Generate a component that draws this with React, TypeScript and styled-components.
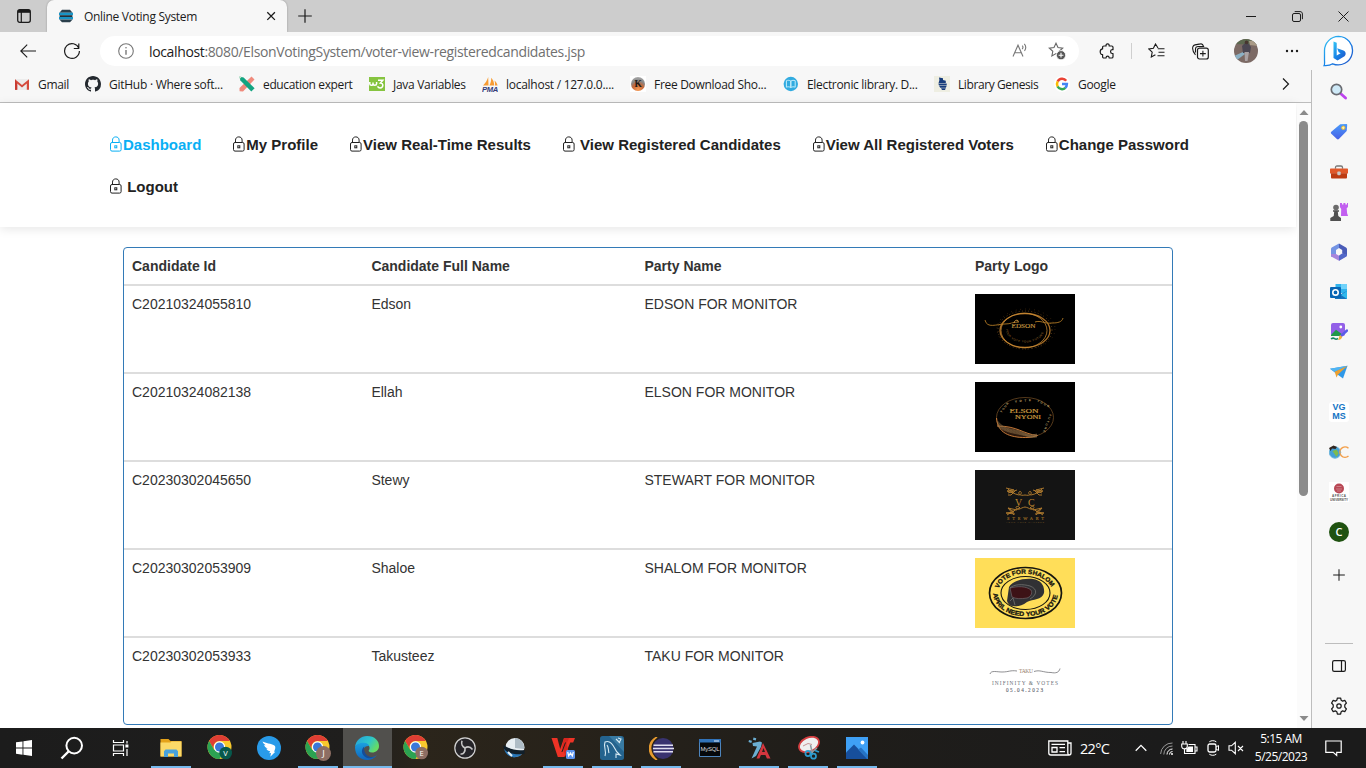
import React from 'react';
import styled, { createGlobalStyle } from 'styled-components';

const GlobalStyle = createGlobalStyle`
  *, *::before, *::after { box-sizing: border-box; }
  html, body { margin: 0; padding: 0; overflow: hidden; background: #fff; }
  svg { display: block; flex: none; }
`;

const uiFont = `"Open Sans", "Noto Sans", sans-serif`;
const pageFont = `"Liberation Sans", Arial, sans-serif`;

const Screen = styled.div`
  display: flex;
  flex-direction: column;
  width: 1366px;
  height: 768px;
  overflow: hidden;
  font-family: ${uiFont};
  color: #1b1b1b;
`;

const TabStrip = styled.div`
  display: flex;
  height: 32px;
  flex: none;
  background: #cdcdcd;
`;

const Slot = styled.div<{ $w: number }>`
  display: flex;
  flex: none;
  align-items: center;
  justify-content: center;
  width: ${(p) => p.$w}px;
`;

const Tab = styled.div`
  display: flex;
  align-items: center;
  width: 240px;
  padding: 0 8px 0 11px;
  border-radius: 7px 7px 0 0;
  background: #f7f7f7;
  box-shadow: 0 0 2px rgba(0, 0, 0, 0.3);
`;

const TabTitle = styled.span`
  flex: 1;
  margin-left: 10px;
  font-size: 12px;
  letter-spacing: -0.3px;
  white-space: nowrap;
`;

const Spacer = styled.div`
  flex: 1;
`;

const Toolbar = styled.div`
  display: flex;
  align-items: center;
  height: 38px;
  flex: none;
  padding-left: 6px;
  background: #f7f7f7;
`;

const AddressBar = styled.div`
  display: flex;
  align-items: center;
  width: 979px;
  height: 30px;
  margin: 0 4px 0 6px;
  padding: 0 3px;
  border-radius: 15px;
  background: #fff;
`;

const Url = styled.span`
  flex: 1;
  font-size: 14px;
  letter-spacing: -0.36px;
  white-space: nowrap;
  color: #707070;
  b {
    font-weight: 400;
    color: #1b1b1b;
  }
`;

const ToolDivider = styled.div`
  width: 1px;
  height: 16px;
  background: #cfcfcf;
`;

const Middle = styled.div`
  display: flex;
  height: 658px;
  flex: none;
`;

const BrowserColumn = styled.div`
  display: flex;
  flex-direction: column;
  width: 1311px;
`;

const BookmarkBar = styled.div`
  display: flex;
  align-items: center;
  height: 33px;
  flex: none;
  padding: 0 0 4px 14px;
  border-bottom: 1px solid #bdbdbd;
  background: #f7f7f7;
`;

const Bookmark = styled.div<{ $w: number; $track?: number }>`
  display: flex;
  align-items: center;
  gap: 8px;
  width: ${(p) => p.$w}px;
  flex: none;
  font-size: 12px;
  letter-spacing: ${(p) => p.$track ?? -0.3}px;
  white-space: nowrap;
`;

const Viewport = styled.div`
  display: flex;
  flex: 1;
  min-height: 0;
`;

const Page = styled.main`
  width: 1297px;
  background: #fff;
  font-family: ${pageFont};
`;

const Header = styled.header`
  width: 1296px;
  height: 124px;
  padding: 20px 90px 0 109px;
  box-shadow: 0 2px 10px rgba(0, 0, 0, 0.1);
`;

const Nav = styled.nav`
  display: flex;
  flex-wrap: wrap;
  column-gap: 31px;
`;

const NavItem = styled.a<{ $active?: boolean; $spaced?: boolean }>`
  display: flex;
  align-items: center;
  gap: ${(p) => (p.$spaced ? 4.2 : 0)}px;
  height: 42px;
  font-size: 15px;
  font-weight: 700;
  white-space: nowrap;
  color: ${(p) => (p.$active ? '#09aff4' : '#222')};
`;

const Table = styled.section`
  width: 1050px;
  margin: 20px 0 0 123px;
  border: 1px solid #337ab7;
  border-radius: 4px;
  font-size: 14px;
  line-height: 20px;
  color: #333;
`;

const Row = styled.div<{ $head?: boolean }>`
  display: grid;
  grid-template-columns: 239.4px 273.1px 330.5px 1fr;
  height: ${(p) => (p.$head ? 38 : 88)}px;
  border-bottom: 2px solid #ddd;
  font-weight: ${(p) => (p.$head ? 700 : 400)};
  &:last-child {
    height: 86px;
    border-bottom: 0;
  }
`;

const Cell = styled.div`
  padding: 8px;
`;

const ScrollTrack = styled.div`
  display: flex;
  flex-direction: column;
  align-items: center;
  width: 14px;
  padding: 6px 1px 6px 0;
  background: #fbfbfb;
`;

const ScrollThumb = styled.div`
  width: 9px;
  height: 375px;
  margin-top: 5px;
  border-radius: 5px;
  background: #8b8b8b;
`;

const Sidebar = styled.aside`
  display: flex;
  flex-direction: column;
  align-items: center;
  width: 55px;
  padding-top: 2px;
  border-left: 1px solid #bdbdbd;
  background: #f7f7f7;
`;

const SideSlot = styled.div<{ $h?: number }>`
  display: flex;
  align-items: center;
  justify-content: center;
  height: ${(p) => p.$h ?? 40}px;
  flex: none;
`;

const SideRule = styled.div`
  width: 28px;
  height: 1px;
  margin-top: 45px;
  margin-bottom: 2px;
  background: #bdbdbd;
`;

const TextTile = styled.div`
  display: flex;
  flex-direction: column;
  align-items: center;
  justify-content: center;
  width: 20px;
  height: 20px;
  border-radius: 3px;
  background: #fff;
  font: 700 9px/9px "Liberation Sans", sans-serif;
  color: #1374c4;
`;

const LetterDisc = styled.div`
  width: 20px;
  height: 20px;
  border-radius: 50%;
  background: #1f5210;
  font: 600 11px/19px "Open Sans", sans-serif;
  text-align: center;
  color: #fff;
`;

const Taskbar = styled.footer`
  display: flex;
  height: 40px;
  flex: none;
  background: linear-gradient(90deg, #1c1c1c 0%, #1f1e1d 26%, #2b251b 31%, #27221a 42%, #1f1d1a 62%, #1b1b1b 85%);
  color: #fff;
`;

const Task = styled.div<{ $w?: number; $state?: 'open' | 'active' }>`
  display: flex;
  align-items: center;
  justify-content: center;
  width: ${(p) => p.$w ?? 49}px;
  flex: none;
  background: ${(p) => (p.$state === 'active' ? '#51504d' : 'transparent')};
  background-image: ${(p) => (p.$state ? 'linear-gradient(#76b9ed, #76b9ed)' : 'none')};
  background-repeat: no-repeat;
  background-position: center bottom;
  background-size: ${(p) => (p.$state === 'active' ? '100%' : '40px')} 2px;
`;

const Weather = styled.span`
  align-self: center;
  width: 48px;
  padding-left: 4px;
  font-size: 14.5px;
  letter-spacing: -0.7px;
`;

const Clock = styled.div`
  width: 66px;
  padding-top: 2px;
  font-size: 12px;
  line-height: 18px;
  letter-spacing: -0.5px;
  text-align: center;
`;

const stroke = { fill: 'none', stroke: 'currentColor', strokeWidth: 1 } as const;

const LockIcon = () => (
  <svg width="14" height="16" viewBox="0 0 14 16" {...stroke}>
    <path d="M3.5 6.5V4.1C3.5 2.2 4.8.9 6.8.9s3.3 1.3 3.3 3.2v2.4" />
    <rect x="1.5" y="6.5" width="10.6" height="8.6" rx="1.5" />
    <rect x="5.8" y="9.8" width="2" height="2" />
  </svg>
);

const PlusIcon = ({ size = 14 }: { size?: number }) => (
  <svg width={size} height={size} viewBox="0 0 14 14" {...stroke}>
    <path d="M7 .2v13.6M.2 7h13.6" strokeWidth="1.2" />
  </svg>
);

const ServerIcon = () => (
  <svg width="16" height="16" viewBox="0 0 16 16">
    <path d="M4 1.8h8l2.6 2.9H1.4z" fill="#2a3f4c" />
    <path d="M1 4.7h14v2.5H1z" fill="#1894c6" />
    <path d="M1.6 7.2h12.8V9H1.6z" fill="#1f2f3a" />
    <path d="M1 9h14v2.4H1z" fill="#1894c6" />
    <path d="M1.4 11.4h13.2L12 14.3H4z" fill="#2a3f4c" />
  </svg>
);

const starPath = 'M8 1.2l2 4.3 4.7.6-3.5 3.2.9 4.6L8 11.6l-4.1 2.3.9-4.6L1.3 6.1 6 5.5z';

const GmailIcon = () => (
  <svg width="16" height="16" viewBox="0 0 16 16">
    <path d="M1 3h14v11H1z" fill="#ececec" />
    <path d="M1 13.8V3.3l7 5.6 7-5.6v10.5h-2.2V7.4L8 11.4 3.2 7.4v6.4z" fill="#d54b3d" />
    <path d="M3.2 7.4v6.4H1V3.3z" fill="#c83b31" />
  </svg>
);

const GithubIcon = () => (
  <svg width="16" height="16" viewBox="0 0 16 16">
    <path
      fill="#24292f"
      d="M8 0C3.58 0 0 3.58 0 8c0 3.54 2.29 6.53 5.47 7.59.4.07.55-.17.55-.38 0-.19-.01-.82-.01-1.49-2.01.37-2.53-.49-2.69-.94-.09-.23-.48-.94-.82-1.13-.28-.15-.68-.52-.01-.53.63-.01 1.08.58 1.23.82.72 1.21 1.87.87 2.33.66.07-.52.28-.87.51-1.07-1.78-.2-3.64-.89-3.64-3.95 0-.87.31-1.59.82-2.15-.08-.2-.36-1.02.08-2.12 0 0 .67-.21 2.2.82.64-.18 1.32-.27 2-.27s1.36.09 2 .27c1.53-1.04 2.2-.82 2.2-.82.44 1.1.16 1.92.08 2.12.51.56.82 1.27.82 2.15 0 3.07-1.87 3.75-3.65 3.95.29.25.54.73.54 1.48 0 1.07-.01 1.93-.01 2.2 0 .21.15.46.55.38A8 8 0 0016 8c0-4.42-3.58-8-8-8z"
    />
  </svg>
);

const PencilsIcon = () => (
  <svg width="16" height="16" viewBox="0 0 16 16">
    <path d="M12.5.5l3 3L4 15.5.6 15.3.5 12z" fill="#f08a7c" />
    <path d="M.4.4l4.2 1 11 10.8-3.3 3.3L1.4 4.6z" fill="#13a481" />
    <path d="M.4.4l2.2.5-1.7 1.9z" fill="#d9edc9" />
  </svg>
);

const W3Icon = () => (
  <svg width="16" height="14" viewBox="0 0 16 14">
    <path d="M0 0h16v14H0z" fill="#86c440" />
    <path d="M.8 5v1.7c0 2 3.2 2 3.2 0V5.4v1.3c0 2 3.6 2 3.6 0V5M9 3.2h4.8L11.4 6c3.4.2 3.1 4.900-.3 4.900-1.200 0-2-.5-2.600-1.500" fill="none" stroke="#fff" strokeWidth="1.5" />
  </svg>
);

const PmaIcon = () => (
  <svg width="16" height="16" viewBox="0 0 16 16">
    <path d="M1 9.5C3 7.5 5.5 4 6.2 1l.3 8.5zM7.4 9.5c1.4-2.8 2-5.3 1.8-7.7 2 2 3 5 3 7.7zM13 9.5c.1-2 0-3.600-.6-5 1.700 1.300 2.700 3 3.200 5z" fill="#f79b32" />
    <text x="0" y="15.600" fontFamily="Liberation Sans" fontSize="6.800" fontWeight="700" fontStyle="italic" fill="#343c78" textLength="16" lengthAdjust="spacingAndGlyphs">PMA</text>
  </svg>
);

const KIcon = () => (
  <svg width="16" height="16" viewBox="0 0 16 16">
    <defs>
      <radialGradient id="kball" cx=".5" cy=".9" r=".9">
        <stop offset="0" stopColor="#f79a52" />
        <stop offset=".45" stopColor="#c4673a" />
        <stop offset=".7" stopColor="#888" />
        <stop offset="1" stopColor="#aaa" />
      </radialGradient>
    </defs>
    <path d="M0 0h16v16H0z" fill="#fff" />
    <circle cx="8" cy="8" r="7" fill="url(#kball)" />
    <text x="4.6" y="11.2" fontFamily="Liberation Serif" fontSize="9.5" fontWeight="700" fill="#201915">K</text>
  </svg>
);

const BookIcon = () => (
  <svg width="16" height="16" viewBox="0 0 16 16">
    <circle cx="7.8" cy="8" r="7.2" fill="#31abe0" />
    <path d="M3.4 4.7c1.5-.6 3-.5 4.4.3v6.5c-1.4-.8-2.9-.9-4.4-.3zM12.2 4.7c-1.5-.6-3-.5-4.4.3v6.5c1.4-.8 2.9-.9 4.4-.3z" fill="none" stroke="#c2edfc" />
  </svg>
);

const GenesisIcon = () => (
  <svg width="16" height="16" viewBox="0 0 16 16">
    <path d="M0 0h16v16H0z" fill="#eeeee2" />
    <path d="M5 1.5l4 .8v1.6l2.8.8v2.2H4.6L5.4 4zM4.3 7.4h8.4v2H5zM5.2 10h7.4l-.8 1.7H6.2zM7 12.3h4.8L11 14H8z" fill="#173c7b" />
  </svg>
);

const GoogleIcon = () => (
  <svg width="16" height="16" viewBox="0 0 16 16">
    <circle cx="8" cy="8" r="8" fill="#fff" />
    <g fill="none" strokeWidth="2.5">
      <path d="M12.2 4.7A5 5 0 003.7 5.5" stroke="#ea4335" />
      <path d="M3.7 5.4a5.2 5.2 0 000 5.2" stroke="#fbbc05" />
      <path d="M3.6 10.5a5 5 0 007.8 1.3" stroke="#34a853" />
      <path d="M8 8.1h4.9c0 1.7-.6 2.9-1.6 3.8" stroke="#4285f4" />
    </g>
  </svg>
);

const PuzzleIcon = () => (
  <svg width="17" height="17" viewBox="0 0 17 17" {...stroke} strokeWidth="1.2" strokeLinejoin="round">
    <path d="M3.6 5.8V4.3c0-.8.5-1.3 1.3-1.3h2.2C6.8 1.6 7.5.9 8.6.9s1.8.7 1.5 2.1h2.6c.8 0 1.3.5 1.3 1.3v2.4h-.8c-2.2 0-2.2 3.8 0 3.8h.8v3.2c0 .8-.5 1.3-1.3 1.3h-2.5c-.1-1.3-.7-1.8-1.6-1.8S7.1 13.7 7 15H4.9c-.8 0-1.3-.5-1.3-1.3v-2.2C2.1 11.7 1.2 10.3 1.2 8.7s.9-2.8 2.4-2.9z" />
  </svg>
);

const Avatar = () => (
  <svg width="24" height="24" viewBox="0 0 24 24">
    <defs><clipPath id="face"><circle cx="12" cy="12" r="12" /></clipPath></defs>
    <g clipPath="url(#face)">
      <path d="M0 0h24v24H0z" fill="#7c6a65" />
      <path d="M0 0h24v6L0 5z" fill="#5c684f" />
      <path d="M15 2l9-1v6l-8-1z" fill="#a99a86" />
      <path d="M0 17l9-4 2 2-8 6z" fill="#8bb0c4" />
      <path d="M8 7l3-3h3l3 4-1 6H9z" fill="#4b4752" />
      <circle cx="12.5" cy="3.4" r="1.8" fill="#47362f" />
      <path d="M10.5 13H15l-1.500 9H11z" fill="#aaa2a4" />
    </g>
  </svg>
);

const BingIcon = () => (
  <svg width="32" height="32" viewBox="0 0 32 32">
    <defs>
      <linearGradient id="bing" x2="1" y2="1">
        <stop stopColor="#35c6f4" /><stop offset=".5" stopColor="#1784e8" /><stop offset="1" stopColor="#2453c6" />
      </linearGradient>
    </defs>
    <path d="M16.5 1.3a14.3 14.3 0 11-5.8 27.5c-2.4 1.6-5.1 2-8.6 1.8.6-1 .6-2.5.4-5.200V15.5A14.4 14.4 0 0116.5 1.3z" fill="#fff" stroke="url(#bing)" strokeWidth="1.3" />
    <path d="M11.5 6.5l3.2 1.2v12.7l3.9-2.1-1.9-1-1.6-4 6.4 2.2c2.3.9 3 4 1 5.700l-7 4.300-4-2.600z" fill="url(#bing)" />
  </svg>
);

const SearchColor = () => (
  <svg width="18" height="18" viewBox="0 0 18 18">
    <path d="M10.8 10.8l4.8 4.2" stroke="#bc43ed" strokeWidth="2.8" strokeLinecap="round" />
    <circle cx="6.5" cy="6.5" r="5.2" fill="#cfeaf8" stroke="#6a6c72" strokeWidth="1.7" />
  </svg>
);
const TagIcon = () => (
  <svg width="18" height="18" viewBox="0 0 18 18">
    <defs><linearGradient id="tag" x2="0" y2="1"><stop stopColor="#4a9bfb" /><stop offset="1" stopColor="#4860e5" /></linearGradient></defs>
    <path d="M10.2 1.3l6-.4c.6 0 1 .4 1 1l-.5 6-7.8 8.2c-.6.6-1.4.6-2 0L1.3 10.8c-.6-.6-.6-1.4 0-2z" fill="url(#tag)" />
    <circle cx="13.3" cy="4.8" r="1.7" fill="#fff2b0" stroke="#e9ba33" />
  </svg>
);
const ToolboxIcon = () => (
  <svg width="18" height="16" viewBox="0 0 18 16">
    <path d="M5.5 4.8V3.6c0-1 .6-1.6 1.5-1.6h4c.9 0 1.5.6 1.5 1.6v1.2" fill="none" stroke="#777" strokeWidth="1.3" />
    <path d="M1 4.6h16c.6 0 1 .4 1 1V9.5H0V5.6c0-.6.4-1 1-1z" fill="#e0582a" />
    <path d="M1 9.3h16v4c0 .8-.5 1.2-1.2 1.2H2.2c-.7 0-1.2-.4-1.2-1.2z" fill="#bd3c13" />
    <rect x="7.3" y="7.6" width="3.4" height="3.6" rx="1" fill="#c8c9c8" />
  </svg>
);
const ChessIcon = () => (
  <svg width="18" height="18" viewBox="0 0 18 18">
    <path d="M10 0h2v1.6h1.4V0h2v1.6H17V0h1v4l-1.3 1.3.4 5 1 2.7H11l.2-7L9.9 4z" fill="#c260f0" />
    <circle cx="6" cy="4.6" r="2.8" fill="#6b6b6b" />
    <path d="M3 7.3h6v1.5H7.8l.5 4.2 2.7 2.1V18H.3v-2.9L3.7 13l.5-4.2H3z" fill="#505050" />
  </svg>
);
const OfficeIcon = () => (
  <svg width="18" height="18" viewBox="0 0 18 18">
    <path d="M9 .4L1.700 4.600C1.200 5 1 5.400 1 6v8l5-3V7l3-2z" fill="#7494e4" />
    <path d="M9 .4l7 4c.6.400 1 .9 1 1.600v6.500l-4.800-2V7L9 5z" fill="#4a5cb8" />
    <path d="M1 11v1.500c0 .6.200 1 .7 1.300L9 17.700l7.300-4.200c.5-.3.7-.7.7-1.200l-4.800-1.800L9 12.700 6 11z" fill="#a684dc" />
    <path d="M17 11.500c0 1-.2 1.600-.7 2L9 17.700v-5l3.200-2.200z" fill="#5268c8" />
  </svg>
);
const OutlookIcon = () => (
  <svg width="18" height="18" viewBox="0 0 18 18">
    <path d="M5.5 1H17v9H5.5z" fill="#31b3ed" /><path d="M11 1h6v5h-6z" fill="#70d2fa" />
    <path d="M4 8l7 3 6-3v8H5z" fill="#1672bd" /><path d="M17 8l-6 4 6 4z" fill="#30b9ed" />
    <rect y="4" width="11" height="11" rx="1" fill="#0866b5" />
    <circle cx="5.5" cy="9.4" r="2.7" fill="none" stroke="#fff" strokeWidth="1.6" />
  </svg>
);
const DesignerIcon = () => (
  <svg width="18" height="18" viewBox="0 0 18 18">
    <rect x="1" y="0" width="14" height="13" rx="2" fill="#9360e8" />
    <circle cx="10.8" cy="4" r="1.4" fill="#fff" />
    <path d="M1 12l5-5.2 7 5.2v1H1z" fill="#219849" />
    <path d="M1 16c4-3 3 2 7-.5" fill="none" stroke="#148562" strokeWidth="1.5" />
    <path d="M17 7.5L11 13" stroke="#5a5ce8" strokeWidth="2.4" strokeLinecap="round" />
    <path d="M10 12l2.2 2.1c-.5 2-2.2 2.9-4.2 2.9 1-.9.7-3.2 2-5z" fill="#f3af37" />
  </svg>
);
const PlaneIcon = () => (
  <svg width="18" height="14" viewBox="0 0 18 14">
    <path d="M0 3.8L17.5.7 13 13.5l-5.5-4z" fill="#2f98e8" />
    <path d="M0 3.8L17.5.7l-12.8 6z" fill="#50b4f2" /><path d="M4.7 6.7L17.5.7 8 9.5l-1.5 3z" fill="#eba032" />
  </svg>
);
const GlobeIcon = () => (
  <svg width="20" height="16" viewBox="0 0 20 16">
    <circle cx="6" cy="8.5" r="5.7" fill="#45a0d6" stroke="#6fb7dc" /><path d="M3.5 7l4-1.5 2 3.5-2 4-2-3z" fill="#7fbc4c" />
    <path d="M0 4l4.5-2.5L8 3 6.5 5 3 4.5 1.500 7z" fill="#32251f" />
    <path d="M19.5 4.2a5.2 5.2 0 100 7.8" fill="none" stroke="#f3a04b" strokeWidth="1.5" />
  </svg>
);
const AfricaIcon = () => (
  <svg width="20" height="20" viewBox="0 0 20 20">
    <path d="M0 0h20v20H0z" fill="#fff" /><circle cx="10" cy="6.5" r="5" fill="#b94855" />
    <path d="M7.5 4.5h5M7 7h6M8 9h4" stroke="#cf7f88" />
    <text x="3" y="15.2" fontFamily="Liberation Sans" fontSize="3" fontWeight="700" fill="#555" textLength="14">AFRICA</text>
    <text x="1" y="18.6" fontFamily="Liberation Sans" fontSize="3" fontWeight="700" fill="#555" textLength="18">UNIVERSITY</text>
  </svg>
);
const GearIcon = () => (
  <svg width="18" height="18" viewBox="0 0 18 18" {...stroke} strokeWidth="1.25" strokeLinejoin="round">
    <path d="M7.4 1h3.2l.6 2.3 1.4.8 2.2-.7L16.4 6l-1.6 1.8v2.4l1.6 1.8-1.6 2.6-2.2-.7-1.4.8-.6 2.3H7.4l-.6-2.3-1.4-.8-2.2.7L1.6 12l1.6-1.8V7.8L1.6 6l1.6-2.6 2.2.7 1.4-.8z" />
    <circle cx="9" cy="9" r="2.2" />
  </svg>
);

const EdsonLogo = () => (
  <svg width="100" height="70" viewBox="0 0 100 70">
    <path d="M0 0h100v70H0z" />
    <ellipse cx="50" cy="36.5" rx="25" ry="17" fill="none" stroke="#a76e27" strokeWidth="1.3" />
    <ellipse cx="49" cy="36.5" rx="23" ry="17.3" fill="none" stroke="#d69438" strokeWidth=".7" />
    <ellipse cx="50" cy="36" rx="27" ry="19" fill="none" stroke="#76501f" strokeWidth="1" strokeDasharray=".7 2.5" />
    <ellipse cx="51" cy="35" rx="29" ry="20" fill="none" stroke="#694118" strokeWidth=".8" strokeDasharray=".6 4" />
    <path d="M10 26c2 9 12 4 20 4 6 0 8-2 14-2M60 28c6-2 9 2 17 1 6 0 10-1 11-5" fill="none" stroke="#b27a25" strokeWidth=".9" />
    <path d="M36 29.5h28v8H36z" />
    <text x="36.5" y="34.4" fontFamily="Liberation Serif" fontSize="6" fill="#c09440" stroke="#c09440" strokeWidth=".15" textLength="24" lengthAdjust="spacingAndGlyphs">EDSON</text>
    <path id="edarc" d="M31 35c0 18 38 18 38 0" fill="none" />
    <text fontFamily="Liberation Sans" fontSize="2.8" fill="#a7752f"><textPath href="#edarc" textLength="48">YOUR VOTE YOUR FUTURE</textPath></text>
    <path d="M39 29c0-3 5-4 4-1" fill="none" stroke="#ca9540" />
  </svg>
);

const arcWords = [
  { word: 'YOUR', x: 26.5, y: 31, turn: -52, length: 12 },
  { word: 'VOTE', x: 40, y: 20.5, turn: -5, length: 16 },
  { word: 'YOUR', x: 62, y: 19.5, turn: 27, length: 13 },
  { word: 'FUTURE', x: 74.5, y: 32, turn: 110, length: 19 },
];

const ElsonLogo = () => (
  <svg width="100" height="70" viewBox="0 0 100 70">
    <path d="M0 0h100v70H0z" />
    <ellipse cx="50" cy="35.5" rx="28.5" ry="20" fill="none" stroke="#795127" strokeWidth=".7" />
    <path d="M21.5 36c1 15 13 19.5 29 19.5 5 0 9-1 12-2C48 52 43 44 22 44" fill="#2b180d" stroke="#d5823c" strokeWidth=".9" />
    {[0, 1, 2, 3, 4, 5].map((n) => (
      <path key={n} d={`M22.5 ${39 + n}C30 ${49 + n * 0.3} 39 ${46 + n} 47 ${50 + n * 0.6}s10 3 15 2`} fill="none" stroke="#8f7048" strokeWidth=".5" />
    ))}
    {arcWords.map((w) => (
      <text
        key={w.turn}
        transform={`translate(${w.x} ${w.y}) rotate(${w.turn})`}
        fontFamily="Liberation Sans"
        fontSize="3"
        fontWeight="700"
        fill="#c4ac72"
        textLength={w.length}
      >
        {w.word}
      </text>
    ))}
    <text x="34.5" y="30.900" fontFamily="Liberation Serif" fontSize="5.1" fill="#c8983f" stroke="#c8983f" strokeWidth=".15" textLength="29" lengthAdjust="spacingAndGlyphs">ELSON</text>
    <text x="40" y="37.2" fontFamily="Liberation Serif" fontSize="5.1" fill="#c8983f" stroke="#c8983f" strokeWidth=".15" textLength="26" lengthAdjust="spacingAndGlyphs">NYONI</text>
  </svg>
);
const StewartLogo = () => (
  <svg width="100" height="70" viewBox="0 0 100 70">
    <path d="M0 0h100v70H0z" fill="#141414" />
    {[1, -1].map((side) => (
      <g key={side} transform={`translate(50 0) scale(${side} 1)`} fill="none" stroke="#aa772d" strokeWidth="1">
        <path d="M0 25c5 1 7-1 6-3-2-2-4 2 0 3 5-1 8-3 11-6M19 18l-8 2 7 1-6 2M9 20l5 5h3M8 20l9 3M0 37c5 1 5 3 8 2 3-2-1-4-3-1 3 1 5 2 13 7M8 40l9-2-6 4 8 1-9 1M11 45l6-7" />
      </g>
    ))}
    <text x="40" y="35.5" fontFamily="Liberation Serif" fontSize="10" fill="#c0872f">V</text>
    <text x="53" y="35.5" fontFamily="Liberation Serif" fontSize="10" fill="#c0872f">C</text>
    <text x="32" y="49.5" fontFamily="Liberation Serif" fontSize="4.4" fill="#9c6c24" stroke="#9c6c24" strokeWidth=".15" textLength="37">STEWART</text>
    <text x="31" y="52.8" fontFamily="Liberation Sans" fontSize="2.3" fill="#6e5325" textLength="38">YOUR VOTE MATTERS</text>
  </svg>
);
const ShalomLogo = () => (
  <svg width="100" height="70" viewBox="0 0 100 70">
    <path d="M0 0h100v70H0z" fill="#ffde59" />
    <ellipse cx="50.5" cy="35" rx="36" ry="25.5" fill="none" stroke="#15150f" strokeWidth="1.7" />
    <ellipse cx="50.5" cy="35" rx="24.5" ry="16.5" fill="none" stroke="#15150f" strokeWidth="1.1" />
    <path id="shtop" d="M23.5 30.5C31 10.500 70 10.500 78.500 33" fill="none" />
    <path id="shbot" d="M18 33.5C18 66.500 83 66.500 83 33.500" fill="none" />
    <g fontFamily="Liberation Sans" fontWeight="700" fill="#15150f" stroke="#15150f" strokeWidth=".3">
      <text fontSize="6.2"><textPath href="#shtop" textLength="63" lengthAdjust="spacingAndGlyphs">VOTE FOR SHALOM</textPath></text>
      <text fontSize="6.4"><textPath href="#shbot" startOffset="2" textLength="85" lengthAdjust="spacingAndGlyphs">APRIL NEED YOUR VOTE</textPath></text>
    </g>
    <path d="M34 29c3-6 14-9 24-8 8 1 12 7 11 14-2 7-11 6-17 9-5 4-10 5-14 4-3 0-5-2-6-5z" fill="#313134" />
    <path d="M35 30c8-2 16-2 21 2 2 4-1 7-4 8-6 1-11 1-15-1z" fill="#3d1216" stroke="#71666a" strokeWidth=".7" />
    <path d="M35 30c4-4 13-4 20-2 8 3 7 9 0 13M35 43l3-3 2 7" fill="none" stroke="#898987" strokeWidth=".6" />
  </svg>
);
const TakuLogo = () => (
  <svg width="100" height="70" viewBox="0 0 100 70">
    <path d="M15 28c1-4 7-2 12-2 7 0 8-2 15-1M59 25.5c6-2 9 1 17 1 5 1 8 0 9-4" fill="none" stroke="#606064" strokeWidth=".7" />
    <text x="44" y="27.3" fontFamily="Liberation Serif" fontSize="5.5" fill="#947a69" textLength="14">TAKU</text>
    <text x="17" y="38.7" fontFamily="Liberation Serif" fontSize="5.4" fill="#6a7079" textLength="66">INIFINITY &amp; VOTES</text>
    <text x="31" y="46" fontFamily="Liberation Serif" fontSize="5.2" fill="#59616d" stroke="#59616d" strokeWidth=".1" textLength="37">05.04.2023</text>
  </svg>
);

const ChromeIcon = ({ letter, color, large }: { letter: string; color: string; large?: boolean }) => (
  <svg width="26" height="26" viewBox="0 0 26 26">
    <circle cx="12.5" cy="12" r="12" fill="#f9c82d" />
    <path d="M2.1 6A12 12 0 0122.9 6H12.5a6 6 0 00-5.2 9z" fill="#df3e34" />
    <path d="M2.1 6A12 12 0 0012.5 24l5.2-9H7.3z" fill="#2ba252" />
    <circle cx="12.5" cy="12" r="5.7" fill="#fff" /><circle cx="12.5" cy="12" r="4.5" fill="#3b78d8" />
    <circle cx={large ? 18.5 : 18.7} cy={large ? 18.5 : 18} r={large ? 7.5 : 6.3} fill={color} />
    <text x="18.6" y={large ? 21.9 : 20.8} textAnchor="middle" fontFamily="Open Sans" fontSize={large ? 9.5 : 7.5} fill="#fff">{letter}</text>
  </svg>
);

const StartIcon = () => <svg width="16" height="16" viewBox="0 0 16 16" fill="#fff"><path d="M0 2.3l6.5-.9v6.2H0zM7.4 1.2L16 0v7.6H7.4zM0 8.5h6.5v6.2L0 13.8zM7.4 8.5H16V16l-8.600-1.200z" /></svg>;
const TaskSearch = () => <svg width="24" height="24" viewBox="0 0 24 24" fill="none" stroke="#fff" strokeWidth="2"><circle cx="14.2" cy="9.6" r="7.8" /><path d="M8.5 15.5l-7 7" strokeWidth="2.4" /></svg>;
const TaskView = () => <svg width="18" height="18" viewBox="0 0 18 18" fill="none" stroke="#fff" strokeWidth="1.2"><path d="M1.5 1v2.5h10V1M1.5 17v-2.5h10V17M1.5 6h10v6h-10zM15 2v2.5M15 10v7" /><path d="M13.4 5.5h3v3h-3z" fill="#fff" stroke="none" /></svg>;
const FolderIcon = () => (
  <svg width="22" height="20" viewBox="0 0 22 20">
    <path d="M.5 1h8l2 2h11v15.5H.5z" fill="#e4a21a" /><path d="M.5 4.5h10l1-1h10v15H.5z" fill="#fbd968" />
    <path d="M4 19v-5.7l1.5-1.8h11l1.500 1.800V19h-4v-3.5H8V19z" fill="#48a2dc" />
  </svg>
);
const BirdIcon = () => (
  <svg width="24" height="24" viewBox="0 0 24 24"><circle cx="12" cy="12" r="12" fill="#299be9" /><path d="M5.5 5.5c3 1.8 9 2 11.5 3.7 2 1 1.500 4 0 6.500h1.300l-5 5 .7-3.700-1.800.2 1-2c-2.900-.6-3.700-2-3.800-2.800l1.600.2C8 11.300 7.300 10 7.200 9l1.500.3C6.900 8 6.100 7 5.500 5.500z" fill="#fff" /></svg>
);
const EdgeIcon = () => (
  <svg width="24" height="24" viewBox="0 0 24 24">
    <defs>
      <linearGradient id="edgeA" x2="1" y2=".5"><stop stopColor="#269fd9" /><stop offset=".6" stopColor="#2cc5cc" /><stop offset="1" stopColor="#66dc64" /></linearGradient>
      <linearGradient id="edgeB" x2="0" y2="1"><stop stopColor="#1ba0df" /><stop offset="1" stopColor="#1064bd" /></linearGradient>
    </defs>
    <path d="M0 11C1 4 6 0 12 0c8 0 12 5 12 10 0 4-3 6.5-7 6.5-3 0-4-1.3-3-2.4 1.5-2.4 0-6.6-4.5-6.6C5 7.5 1 9 0 11z" fill="url(#edgeA)" />
    <path d="M0 11C2 6 13 5 14.3 10.2 10 9.4 7.5 13 9 17c2 5 9 5.4 13 2-3 4-7 5-10 5C5 24 0 19 0 11z" fill="url(#edgeB)" />
    <path d="M9.2 10.5C6.5 12.6 6 17 9 20c3 3 8 3 11.8.5C14 23 8 18 9.2 10.5z" fill="#164d98" />
  </svg>
);
const ObsIcon = () => (
  <svg width="22" height="22" viewBox="0 0 22 22"><circle cx="11" cy="11" r="10.2" fill="#252428" stroke="#d2d2d2" strokeWidth="1.2" />
    <g fill="none" stroke="#c7c7c7" strokeWidth="1.6"><path d="M8 3.8c-1 3 .5 6 3 7.2M18.5 12.5c-2-2.5-5-3.2-7.5-1.5M6.5 17c3 .5 5-2.5 4.5-6" /></g></svg>
);
const BallIcon = () => (
  <svg width="22" height="22" viewBox="0 0 22 22"><circle cx="12" cy="10.5" r="9.5" fill="#e7eef3" /><path d="M12 1v10l9 1a9.5 9.5 0 00-9-11z" fill="#aebcc6" /><path d="M1 10c5 1 12 5 19 5l-3 4-6 1.5C5 20 1 15 1 10z" fill="#2877b9" /><path d="M.5 8c6 4 12 6 21 5v4C11 18 3 16 .5 11z" fill="#111f2a" /><path d="M5 15l4 4" stroke="#e8f2f8" strokeWidth="2" /></svg>
);
const WpsIcon = () => (
  <svg width="25" height="24" viewBox="0 0 25 24"><path d="M.5 2h5.8l2.900 11L13 2h11l-1.8 4.5h-3L13.500 21H6.8z" fill="#ee3326" /><path d="M13 2h5l-2.5 6 2.5 9-3 4-4-10z" fill="#d8261e" /><path d="M14.500 6.500l-3.600 9.500" stroke="#231f1a" strokeWidth="1" /><rect x="15" y="14" width="9" height="9" rx="1.5" fill="#5c93ed" /><path d="M16.7 16l1 4 1.8-3 1.8 3 1-4" fill="none" stroke="#fff" strokeWidth="1.2" /></svg>
);
const WorkbenchIcon = () => (
  <svg width="24" height="24" viewBox="0 0 24 24"><rect width="24" height="24" rx="2.5" fill="#24638e" /><path d="M3 0h18l3 4v12L9 0z" fill="#387aa2" /><path d="M5 20C7 15 3 11 5 6c7-3 10 8 12 10l3 3-4-1v4M9 17c-1-3 0-5-2-8M16 3l4 4M18 2l3 1-2 4" fill="none" stroke="#d7eaf3" strokeWidth="1.1" /></svg>
);
const EclipseIcon = () => (
  <svg width="25" height="23" viewBox="0 0 25 23"><path d="M8 0C-2 5-2 18 8 23-1 15 0 6 8 0z" fill="#e79b2f" stroke="#e79b2f" strokeWidth="1.5" /><circle cx="14" cy="11.5" r="10.5" fill="#39336f" /><path d="M4.5 8.2H24M4 11.5h21M4.5 14.8H24" stroke="#e1dff0" strokeWidth="1.5" /></svg>
);
const MysqlIcon = () => (
  <svg width="22" height="18" viewBox="0 0 22 18"><path d="M.5.5h21v17H.5z" fill="#05080b" stroke="#4e85bd" /><path d="M0 0h22v3.5H0z" fill="#3173b9" /><path d="M15 2h5" stroke="#dbe7f2" /><text x="1.5" y="11.5" fontFamily="Liberation Sans" fontSize="6" fill="#ddd" textLength="19">MySQL</text></svg>
);
const AnalysisIcon = () => (
  <svg width="23" height="22" viewBox="0 0 23 22"><path d="M1 3l3 .7-.7 2.300L.5 5zM5.500.5l2.800.8-.6 2.200-2.700-.8zM4.500 6L12 4.500l2 1-1 4.500-5 9-4.500 2.500L9 9.500 5 9z" fill="#6baed2" /><path d="M15 6l7.500 15.500h-3.600l-1.500-3.500h-4.500l-1.500 3.500H8.500z" fill="#d4363e" /><path d="M14 15h3l-1.500-4z" fill="#25221d" /></svg>
);
const SnipIcon = () => (
  <svg width="25" height="24" viewBox="0 0 25 24"><ellipse cx="13" cy="8.5" rx="10.5" ry="7" transform="rotate(-25 13 8.5)" fill="#efefef" stroke="#d43e40" strokeWidth="1.8" /><path d="M7 10l5-2.5 4 1" fill="none" stroke="#c69294" /><path d="M14.5 9l2 9M21 12l-7 6" stroke="#8f9ba1" strokeWidth="1.5" /><circle cx="12" cy="17.5" r="2.6" fill="none" stroke="#2d9ccf" strokeWidth="1.7" /><circle cx="17.5" cy="20.2" r="2.5" fill="none" stroke="#2d9ccf" strokeWidth="1.7" /><path d="M19 14.5l4 1.5" stroke="#2d9ccf" strokeWidth="1.8" /></svg>
);
const PhotosIcon = () => (
  <svg width="22" height="22" viewBox="0 0 22 22"><path d="M0 0h22v22H0z" fill="#3fa0f5" /><path d="M0 15.5l8-8L22 22H0z" fill="#174f9c" /><path d="M12 12.5l3-2 7 7.5v4h-1z" fill="#2673c4" /><circle cx="16.5" cy="5.5" r="1.9" fill="#fff" /></svg>
);

const bookmarks: Array<{ name: string; w: number; icon: React.ReactNode; track?: number }> = [
  { name: 'Gmail', w: 71, icon: <GmailIcon /> },
  { name: 'GitHub · Where soft...', w: 154, icon: <GithubIcon />, track: -0.26 },
  { name: 'education expert', w: 130, icon: <PencilsIcon />, track: -0.36 },
  { name: 'Java Variables', w: 113, icon: <W3Icon /> },
  { name: 'localhost / 127.0.0....', w: 148, icon: <PmaIcon />, track: -0.27 },
  { name: 'Free Download Sho...', w: 153, icon: <KIcon /> },
  { name: 'Electronic library. D...', w: 151, icon: <BookIcon />, track: -0.32 },
  { name: 'Library Genesis', w: 120, icon: <GenesisIcon />, track: -0.4 },
  { name: 'Google', w: 80, icon: <GoogleIcon /> },
];

const navItems = [
  { label: 'Dashboard', active: true },
  { label: 'My Profile' },
  { label: 'View Real-Time Results' },
  { label: 'View Registered Candidates', spaced: true },
  { label: 'View All Registered Voters' },
  { label: 'Change Password' },
  { label: 'Logout', spaced: true },
];

const candidates = [
  { id: 'C20210324055810', name: 'Edson', party: 'EDSON FOR MONITOR', logo: <EdsonLogo /> },
  { id: 'C20210324082138', name: 'Ellah', party: 'ELSON FOR MONITOR', logo: <ElsonLogo /> },
  { id: 'C20230302045650', name: 'Stewy', party: 'STEWART FOR MONITOR', logo: <StewartLogo /> },
  { id: 'C20230302053909', name: 'Shaloe', party: 'SHALOM FOR MONITOR', logo: <ShalomLogo /> },
  { id: 'C20230302053933', name: 'Takusteez', party: 'TAKU FOR MONITOR', logo: <TakuLogo /> },
];

const sideApps = [
  <SearchColor />, <TagIcon />, <ToolboxIcon />, <ChessIcon />, <OfficeIcon />, <OutlookIcon />, <DesignerIcon />, <PlaneIcon />,
  <TextTile><span>VG</span><span>MS</span></TextTile>,
  <GlobeIcon />, <AfricaIcon />, <LetterDisc>C</LetterDisc>,
];

const tasks: Array<{ icon: React.ReactNode; state?: 'open' | 'active' }> = [
  { icon: <FolderIcon />, state: 'open' },
  { icon: <ChromeIcon letter="V" color="#07584c" /> },
  { icon: <BirdIcon /> },
  { icon: <ChromeIcon letter="J" color="#8d6e63" large />, state: 'open' },
  { icon: <EdgeIcon />, state: 'active' },
  { icon: <ChromeIcon letter="E" color="#8d6e63" /> },
  { icon: <ObsIcon /> },
  { icon: <BallIcon /> },
  { icon: <WpsIcon />, state: 'open' },
  { icon: <WorkbenchIcon />, state: 'open' },
  { icon: <EclipseIcon />, state: 'open' },
  { icon: <MysqlIcon /> },
  { icon: <AnalysisIcon />, state: 'open' },
  { icon: <SnipIcon />, state: 'open' },
  { icon: <PhotosIcon />, state: 'open' },
];

const BrowserTabs = () => (
  <TabStrip>
    <Slot $w={47}>
      <svg width="14" height="14" viewBox="0 0 14 14" {...stroke}>
        <rect x=".7" y=".7" width="12.6" height="12.6" rx="2" strokeWidth="1.3" />
        <path d="M4.3 3v10" strokeWidth="1.2" /><path d="M1 1h12v2.8H1z" fill="currentColor" stroke="none" />
      </svg>
    </Slot>
    <Tab>
      <ServerIcon />
      <TabTitle>Online Voting System</TabTitle>
      <svg width="16" height="16" viewBox="0 0 16 16" {...stroke}><path d="M4.3 4.3l7.6 7.6M11.9 4.3l-7.6 7.6" strokeWidth="1.3" /></svg>
    </Tab>
    <Slot $w={35}><PlusIcon /></Slot>
    <Spacer />
    <Slot $w={46}><svg width="10" height="10" viewBox="0 0 10 10" {...stroke}><path d="M0 5.5h10" /></svg></Slot>
    <Slot $w={46}><svg width="11" height="11" viewBox="0 0 11 11" {...stroke}><rect x=".5" y="2.5" width="8" height="8" rx="1.5" /><path d="M2.7.6h5.4c1.400 0 2.300.9 2.300 2.300v5.300" /></svg></Slot>
    <Slot $w={46}><svg width="11" height="11" viewBox="0 0 11 11" {...stroke}><path d="M.5.5l10 10M10.5.5l-10 10" /></svg></Slot>
  </TabStrip>
);

const BrowserToolbar = () => (
  <Toolbar>
    <Slot $w={44}><svg width="16" height="14" viewBox="0 0 16 14" {...stroke}><path d="M7.2.6L.8 7l6.4 6.4M1 7h15" strokeWidth="1.1" /></svg></Slot>
    <Slot $w={44}><svg width="18" height="18" viewBox="0 0 18 18" {...stroke}><path d="M15.9 6.3A7.4 7.4 0 1016.4 9M15.8 1.5v5h-5" strokeWidth="1.2" /></svg></Slot>
    <AddressBar>
      <Slot $w={46}><svg width="16" height="16" viewBox="0 0 16 16" fill="none" stroke="#777"><circle cx="8" cy="8" r="7.3" strokeWidth="1.1" /><path d="M8 7v4.8" strokeWidth="1.4" /><circle cx="8" cy="4.7" r=".8" fill="#777" stroke="none" /></svg></Slot>
      <Url><b>localhost</b>:8080/ElsonVotingSystem/voter-view-registeredcandidates.jsp</Url>
      <Slot $w={38}><svg width="17" height="16" viewBox="0 0 17 16" fill="none" stroke="#777"><path d="M1 13.5L6 2.2l5 11.3M2.7 9.7h6.600M10.2 2.7c.9.9.9 2.3 0 3.4M12.3.9c1.700 2 1.700 4.900.2 7" strokeWidth="1.1" /></svg></Slot>
      <Slot $w={35}><svg width="18" height="18" viewBox="0 0 18 18" fill="none" stroke="#666"><path d={starPath} strokeWidth="1.1" /><circle cx="13" cy="13.2" r="4.6" fill="#555" stroke="#fff" strokeWidth=".8" /><path d="M13 10.8v4.8M10.6 13.2h4.8" stroke="#fff" strokeWidth="1.1" /></svg></Slot>
      <Slot $w={2} />
    </AddressBar>
    <Slot $w={48}><PuzzleIcon /></Slot>
    <ToolDivider />
    <Slot $w={48}><svg width="17" height="16" viewBox="0 0 17 16" {...stroke}><path d="M10 5L7.5 1 5.4 5.3.8 6l3.4 3.2-.9 4.8 4.1-2.3M9.8 5.8h6.700M10.5 9.3h6M9.5 12.8h7" strokeWidth="1.1" /></svg></Slot>
    <Slot $w={41}><svg width="17" height="17" viewBox="0 0 17 17" {...stroke}><rect x="5.5" y="5.2" width="10.8" height="10.8" rx="2" strokeWidth="1.2" /><path d="M10.9 7.7v5.8M8 10.6h5.8M3.5 11.8C1.4 9.5.2 6 .9 3.7 1.3 2.6 2 2.2 3 1.9L8.5.9c1.400-.3 2.500.6 2.900 2.300M3.5 9.5V6.2c0-1.700 1-2.700 2.700-2.700h6" strokeWidth="1.1" /></svg></Slot>
    <Slot $w={49}><Avatar /></Slot>
    <Slot $w={43}><svg width="14" height="4" viewBox="0 0 14 4" fill="#1b1b1b"><circle cx="2" cy="2" r="1.2" /><circle cx="7" cy="2" r="1.2" /><circle cx="12" cy="2" r="1.2" /></svg></Slot>
    <Slot $w={50}><BingIcon /></Slot>
  </Toolbar>
);

const CandidateTable = () => (
  <Table>
    <Row $head>
      <Cell>Candidate Id</Cell>
      <Cell>Candidate Full Name</Cell>
      <Cell>Party Name</Cell>
      <Cell>Party Logo</Cell>
    </Row>
    {candidates.map((c) => (
      <Row key={c.id}>
        <Cell>{c.id}</Cell>
        <Cell>{c.name}</Cell>
        <Cell>{c.party}</Cell>
        <Cell>{c.logo}</Cell>
      </Row>
    ))}
  </Table>
);

const SystemTray = () => (
  <>
    <Slot $w={32}><svg width="24" height="16" viewBox="0 0 24 16" fill="none" stroke="#fff" strokeWidth="1.3"><path d="M20 3h3v10c0 1.200-.7 2-2 2M.8 1h19v12c0 1.200.6 2 1.500 2H3c-1.300 0-2.200-.8-2.200-2zM3.500 4.300h13.500M4 7.500h5v4.500H4zM11.500 7.700H17M11.500 11.700H17" /></svg></Slot>
    <Weather>22°C</Weather>
    <Slot $w={34}><svg width="12" height="8" viewBox="0 0 12 8" fill="none" stroke="#fff" strokeWidth="1.3"><path d="M.7 6.8L6 1.4l5.3 5.4" /></svg></Slot>
    <Slot $w={17}><svg width="13" height="13" viewBox="0 0 13 13" fill="none" stroke="#999"><path d="M.6 12A11.5 11.5 0 0112.5 1M3.8 12.5A8.5 8.5 0 0112.5 4" /><path d="M7 12.5A5.5 5.5 0 0112.5 7M9.5 12.5a3 3 0 013-3" stroke="#fff" /><circle cx="12" cy="12" r="1" fill="#fff" stroke="none" /></svg></Slot>
    <Slot $w={28}><svg width="17" height="14" viewBox="0 0 17 14" fill="none" stroke="#fff"><path d="M2 0v3M5 0v3M.7 3h5.6v2.2c0 3.600-5.600 3.600-5.600 0zM3.500 8v4.500H14v-9H7.500M14 6h2v4h-2" strokeWidth="1.1" /><path d="M7.5 5.5H12V11H5.3V8.5z" fill="#fff" stroke="none" /></svg></Slot>
    <Slot $w={20}><svg width="13" height="16" viewBox="0 0 13 16" fill="none" stroke="#fff"><path d="M2.3 1.8c2-1.5 5-1.5 7 0M2.3 14.2c2 1.5 5 1.5 7 0" /><rect x="1" y="4" width="8" height="8" rx="1.7" strokeWidth="1.3" /><path d="M9 7l2.5-1.5v5L9 9" /></svg></Slot>
    <Slot $w={25}><svg width="16" height="14" viewBox="0 0 16 14" fill="none" stroke="#fff"><path d="M1 4.8h2.5l3.800-3.500v11.400L3.500 9.200H1zM10 5l5 5M15 5l-5 5" strokeWidth="1.1" /></svg></Slot>
    <Clock>5:15 AM<br />5/25/2023</Clock>
    <Slot $w={38}><svg width="17" height="17" viewBox="0 0 17 17" fill="none" stroke="#fff" strokeWidth="1.2"><path d="M.8 1h15.4v11.3h-4.5v3.2l-3.500-3.200H.8z" /></svg></Slot>
    <Slot $w={14} />
  </>
);

export default function App() {
  return (
    <Screen>
      <GlobalStyle />
      <BrowserTabs />
      <BrowserToolbar />
      <Middle>
        <BrowserColumn>
          <BookmarkBar>
            {bookmarks.map((b) => (
              <Bookmark key={b.name} $w={b.w} $track={b.track}>{b.icon}<span>{b.name}</span></Bookmark>
            ))}
            <Spacer />
            <Slot $w={50}><svg width="8" height="14" viewBox="0 0 8 14" {...stroke}><path d="M1 1.5L6.5 7 1 12.5" strokeWidth="1.2" /></svg></Slot>
          </BookmarkBar>
          <Viewport>
            <Page>
              <Header>
                <Nav>
                  {navItems.map((n) => (
                    <NavItem key={n.label} $active={n.active} $spaced={n.spaced}><LockIcon />{n.label}</NavItem>
                  ))}
                </Nav>
              </Header>
              <CandidateTable />
            </Page>
            <ScrollTrack>
              <svg width="10" height="7" viewBox="0 0 10 7"><path d="M.5 6L5 1l4.5 5z" fill="#8b8b8b" /></svg>
              <ScrollThumb />
              <Spacer />
              <svg width="10" height="7" viewBox="0 0 10 7"><path d="M.5 1L5 6l4.5-5z" fill="#8b8b8b" /></svg>
            </ScrollTrack>
          </Viewport>
        </BrowserColumn>
        <Sidebar>
          {sideApps.map((icon, i) => <SideSlot key={i}>{icon}</SideSlot>)}
          <SideSlot $h={46}><PlusIcon size={12} /></SideSlot>
          <SideRule />
          <SideSlot><svg width="14" height="12" viewBox="0 0 14 12" {...stroke}><rect x=".6" y=".6" width="12.8" height="10.8" rx="1.6" strokeWidth="1.2" /><path d="M9.5 1v10" strokeWidth="1.2" /></svg></SideSlot>
          <SideSlot><GearIcon /></SideSlot>
        </Sidebar>
      </Middle>
      <Taskbar>
        <Task $w={48}><StartIcon /></Task>
        <Task $w={48}><TaskSearch /></Task>
        <Task $w={50.6}><TaskView /></Task>
        {tasks.map((t, i) => <Task key={i} $state={t.state}>{t.icon}</Task>)}
        <Spacer />
        <SystemTray />
      </Taskbar>
    </Screen>
  );
}
